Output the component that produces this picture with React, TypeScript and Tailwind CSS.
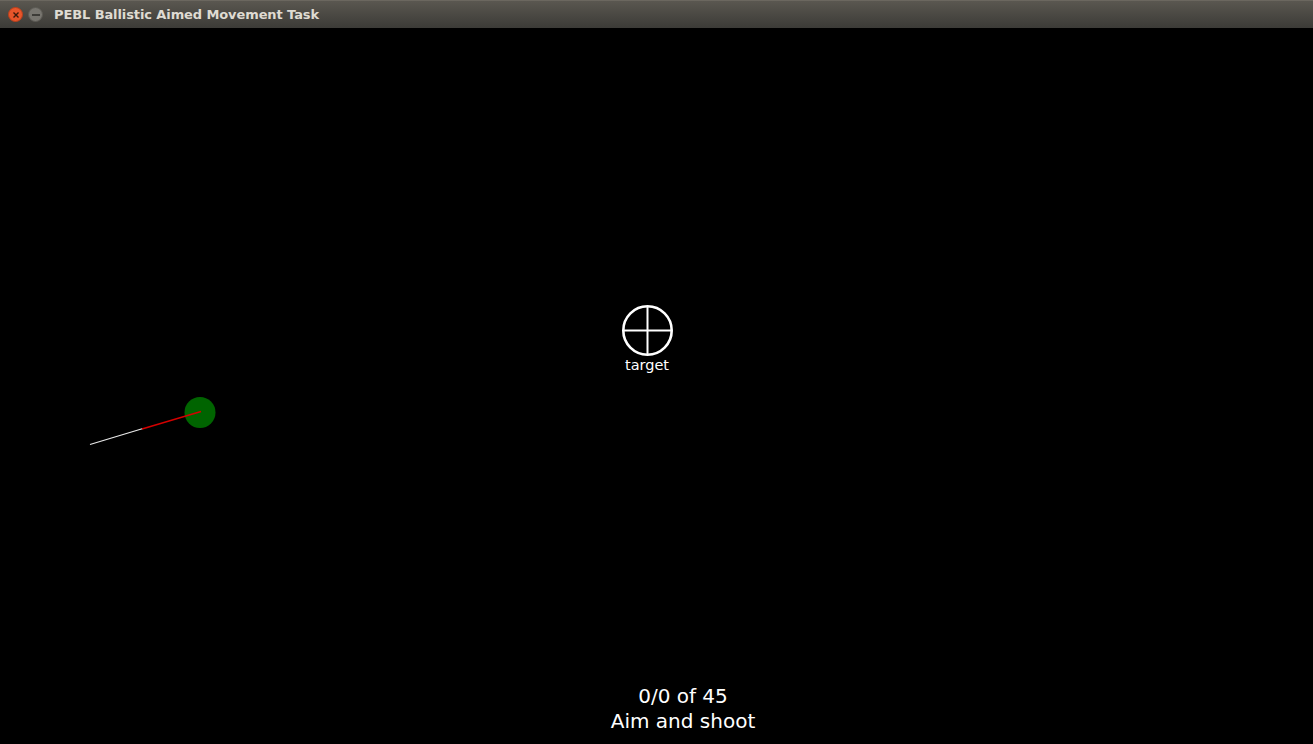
import React from 'react';

const TitleBar: React.FC<{ title: string }> = ({ title }) => {
  return (
    <div className="h-[28px] flex items-center bg-gradient-to-b from-[#5a5750] to-[#3c3b37] border-t border-[#6b675f]">
      <div className="flex items-center gap-[5px] pl-[8px]">
        <div className="w-[15px] h-[15px] rounded-full bg-[#e8552a] flex items-center justify-center border border-[#b8401c]">
          <svg width="8" height="8" viewBox="0 0 8 8">
            <path d="M1.5 1.5 L6.5 6.5 M6.5 1.5 L1.5 6.5" stroke="#3a1a0c" strokeWidth="1.4" />
          </svg>
        </div>
        <div className="w-[15px] h-[15px] rounded-full bg-[#77756f] flex items-center justify-center border border-[#5b5953]">
          <div className="w-[8px] h-[2px] bg-[#3d3c38]" />
        </div>
      </div>
      <span
        className="ml-[11px] text-[13px] font-bold text-[#dfdbd2] tracking-[-0.1px]"
        style={{ fontFamily: '"DejaVu Sans", sans-serif' }}
      >
        {title}
      </span>
    </div>
  );
};

const Canvas: React.FC = () => {
  return (
    <svg className="absolute inset-0" width="1313" height="716" viewBox="0 28 1313 716">
      {/* aiming line */}
      <line x1="90" y1="444.5" x2="143" y2="428.5" stroke="#e8e8e8" strokeWidth="1.3" />
      {/* ball */}
      <circle cx="200" cy="412.5" r="15.5" fill="#006400" />
      <line x1="142" y1="429" x2="201" y2="411.5" stroke="#d40000" strokeWidth="1.4" />
      {/* target */}
      <circle cx="647.5" cy="330.5" r="24.2" fill="none" stroke="#ffffff" strokeWidth="2.6" />
      <line x1="623" y1="330.5" x2="672" y2="330.5" stroke="#ffffff" strokeWidth="2" />
      <line x1="647.5" y1="306" x2="647.5" y2="355" stroke="#ffffff" strokeWidth="2" />
      <text
        x="647"
        y="370"
        textAnchor="middle"
        fill="#ffffff"
        fontSize="14.5"
        fontFamily='"DejaVu Sans", sans-serif'
      >
        target
      </text>
    </svg>
  );
};

export default function App() {
  return (
    <div className="w-[1313px] h-[744px] flex flex-col bg-black overflow-hidden">
      <TitleBar title="PEBL Ballistic Aimed Movement Task" />
      <div className="relative flex-1 flex flex-col justify-end items-center pl-[53px] pb-[10px]">
        <Canvas />
        <div
          className="relative flex flex-col items-center text-white text-[20px] leading-[25px]"
          style={{ fontFamily: '"DejaVu Sans", sans-serif' }}
        >
          <span>0/0 of 45</span>
          <span>Aim and shoot</span>
        </div>
      </div>
    </div>
  );
}
